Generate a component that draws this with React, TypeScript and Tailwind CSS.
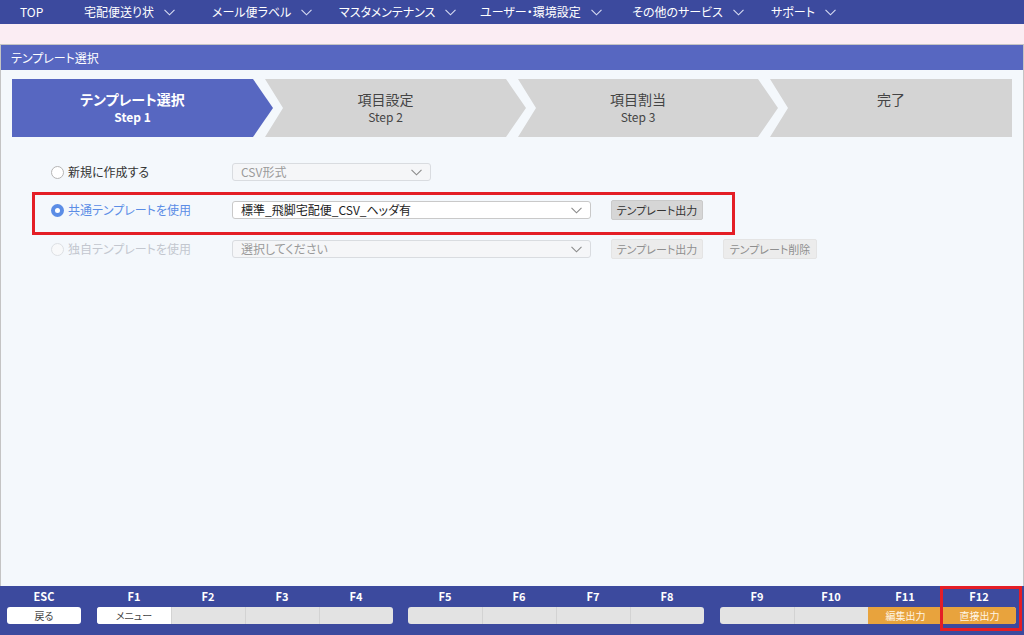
import React from 'react';

const font = "font-['Noto_Sans_CJK_JP','Noto_Sans',sans-serif] [font-feature-settings:'palt']";

function Chevron({ className = '' }: { className?: string }) {
  return (
    <svg width="11" height="7" viewBox="0 0 11 7" className={className}>
      <polyline points="0.5,0.8 5.5,5.8 10.5,0.8" fill="none" stroke="currentColor" strokeWidth="1.1" />
    </svg>
  );
}

const navItems = [
  { label: 'TOP', w: 'w-[64px]', menu: false },
  { label: '宅配便送り状', w: 'w-[128px]', menu: true },
  { label: 'メール便ラベル', w: 'w-[127px]', menu: true },
  { label: 'マスタメンテナンス', w: 'w-[141px]', menu: true },
  { label: 'ユーザー・環境設定', w: 'w-[152px]', menu: true },
  { label: 'その他のサービス', w: 'w-[139px]', menu: true },
  { label: 'サポート', w: 'w-[100px]', menu: true },
];

function Radio({ checked, disabled }: { checked?: boolean; disabled?: boolean }) {
  if (checked) {
    return (
      <span className="w-[13px] h-[13px] rounded-full bg-[#5b8de6] flex items-center justify-center shrink-0">
        <span className="w-[5px] h-[5px] rounded-full bg-white" />
      </span>
    );
  }
  return (
    <span className={`w-[13px] h-[13px] rounded-full border shrink-0 ${disabled ? 'border-[#dde0e4] bg-[#f8f9fa]' : 'border-[#b5b5b5] bg-white'}`} />
  );
}

function Select({ text, width, tone }: { text: string; width: string; tone: 'on' | 'off' }) {
  return (
    <div className={`${width} h-[18px] rounded-[3px] border flex items-center justify-between pl-[8px] pr-[8px] text-[12px] ${tone === 'on' ? 'bg-white border-[#c9c9c9] text-[#222]' : 'bg-[#f5f6f8] border-[#d9dce0] text-[#9a9a9a]'}`}>
      <span className="leading-none">{text}</span>
      <Chevron className="text-[#8a8a8a]" />
    </div>
  );
}

function Btn({ label, disabled, width }: { label: string; disabled?: boolean; width: string }) {
  return (
    <button className={`${width} h-[20px] rounded-[2px] border flex items-center justify-center text-[11px] leading-none ${disabled ? 'bg-[#ececec] border-[#e4e4e4] text-[#8f8f8f]' : 'bg-[#d6d6d6] border-[#cacaca] text-[#333]'}`}>
      {label}
    </button>
  );
}

const stepShapes = [
  '[clip-path:polygon(0_0,calc(100%_-_20px)_0,100%_50%,calc(100%_-_20px)_100%,0_100%)]',
  '[clip-path:polygon(0_0,calc(100%_-_20px)_0,100%_50%,calc(100%_-_20px)_100%,0_100%,18px_50%)]',
  '[clip-path:polygon(0_0,calc(100%_-_20px)_0,100%_50%,calc(100%_-_20px)_100%,0_100%,18px_50%)]',
  '[clip-path:polygon(0_0,100%_0,100%_100%,0_100%,18px_50%)]',
];

const steps = [
  { title: 'テンプレート選択', sub: 'Step 1', w: 'w-[261px]', active: true },
  { title: '項目設定', sub: 'Step 2', w: 'w-[261px] -ml-[8px]' },
  { title: '項目割当', sub: 'Step 3', w: 'w-[260px] -ml-[8px]' },
  { title: '完了', sub: '', w: 'flex-1 -ml-[8px]' },
];

type Key = { k: string; label?: string; tone?: 'white' | 'gray' | 'orange' };
const groups: Key[][] = [
  [{ k: 'F1', label: 'メニュー', tone: 'white' }, { k: 'F2' }, { k: 'F3' }, { k: 'F4' }],
  [{ k: 'F5' }, { k: 'F6' }, { k: 'F7' }, { k: 'F8' }],
  [{ k: 'F9' }, { k: 'F10' }, { k: 'F11', label: '編集出力', tone: 'orange' }, { k: 'F12', label: '直接出力', tone: 'orange' }],
];

function KeyGroup({ keys, className = '' }: { keys: Key[]; className?: string }) {
  return (
    <div className={`w-[296px] flex flex-col ${className}`}>
      <div className="grid grid-cols-4 h-[21px] items-center">
        {keys.map((k) => (
          <span key={k.k} className="text-center text-white text-[11px] font-bold leading-none">{k.k}</span>
        ))}
      </div>
      <div className="grid grid-cols-4 h-[17px] rounded-[3px] overflow-hidden bg-[#e3e3e3]">
        {keys.map((k, i) => (
          <div
            key={k.k}
            className={`flex items-center justify-center text-[10px] leading-none ${i > 0 ? 'border-l border-[#d3d3d3]' : ''} ${k.tone === 'white' ? 'bg-white text-[#444]' : k.tone === 'orange' ? 'bg-[#e8a33d] text-[#fff6e6] border-[#e8a33d]' : ''}`}
          >
            {k.label}
          </div>
        ))}
      </div>
    </div>
  );
}

export default function App() {
  return (
    <div className={`w-[1024px] h-[635px] flex flex-col bg-[#fbedf3] ${font} relative`}>
      {/* top nav */}
      <div className="h-[24px] bg-[#3c4a9e] flex items-center pl-[20px] text-white text-[12px]">
        {navItems.map((n) => (
          <div key={n.label} className={`${n.w} flex items-center gap-[10px] shrink-0`}>
            <span className="leading-none">{n.label}</span>
            {n.menu && <Chevron className="text-[#d8dcf2]" />}
          </div>
        ))}
      </div>
      <div className="h-[20px]" />

      {/* main panel */}
      <div className="flex-1 flex flex-col border border-b-0 border-[#c4c4c4] bg-[#f4f8fc]">
        <div className="h-[25px] bg-[#5767c1] flex items-center px-[10px] text-white text-[12px]">テンプレート選択</div>

        <div className="flex mx-[11px] mt-[9px] h-[58px]">
          {steps.map((s, i) => (
            <div
              key={s.title}
              className={`${s.w} ${stepShapes[i]} ${s.active ? 'bg-[#5767c1] text-white' : 'bg-[#d4d4d4] text-[#444]'} flex flex-col items-center pt-[11px] ${i < 3 ? 'pr-[20px]' : ''}`}
            >
              <span className={`text-[14px] leading-[18px] ${s.active ? 'font-bold' : ''}`}>{s.title}</span>
              {s.sub && <span className={`text-[12px] leading-[18px] ${s.active ? 'font-bold' : 'font-normal'}`}>{s.sub}</span>}
            </div>
          ))}
        </div>

        <div className="mt-[16px] pl-[50px] flex flex-col">
          <div className="h-[38px] flex items-center">
            <div className="w-[181px] flex items-center gap-[4px]">
              <Radio />
              <span className="text-[12px] text-[#333]">新規に作成する</span>
            </div>
            <Select text="CSV形式" width="w-[199px]" tone="off" />
          </div>
          <div className="h-[38px] flex items-center">
            <div className="w-[181px] flex items-center gap-[4px]">
              <Radio checked />
              <span className="text-[12px] text-[#5b8de6]">共通テンプレートを使用</span>
            </div>
            <Select text="標準_飛脚宅配便_CSV_ヘッダ有" width="w-[359px]" tone="on" />
            <div className="ml-[20px]"><Btn label="テンプレート出力" width="w-[92px]" /></div>
          </div>
          <div className="h-[40px] flex items-center">
            <div className="w-[181px] flex items-center gap-[4px]">
              <Radio disabled />
              <span className="text-[12px] text-[#c3c7cf]">独自テンプレートを使用</span>
            </div>
            <Select text="選択してください" width="w-[359px]" tone="off" />
            <div className="ml-[20px]"><Btn label="テンプレート出力" width="w-[92px]" disabled /></div>
            <div className="ml-[20px]"><Btn label="テンプレート削除" width="w-[94px]" disabled /></div>
          </div>
        </div>
      </div>

      {/* function keys */}
      <div className="h-[49px] bg-[#3c4a9e] flex px-[7px]">
        <div className="w-[74px] flex flex-col">
          <div className="h-[21px] flex items-center justify-center text-white text-[11px] font-bold leading-none">ESC</div>
          <div className="h-[17px] rounded-[3px] bg-white flex items-center justify-center text-[10px] text-[#444] leading-none">戻る</div>
        </div>
        <KeyGroup keys={groups[0]} className="ml-[16px]" />
        <KeyGroup keys={groups[1]} className="ml-[15px]" />
        <KeyGroup keys={groups[2]} className="ml-[16px]" />
      </div>

      {/* annotation boxes */}
      <div className="absolute left-[32px] top-[192px] w-[703px] h-[43px] border-[3px] border-[#e41e26] pointer-events-none" />
      <div className="absolute left-[940px] top-[586px] w-[82px] h-[45px] border-[3px] border-[#e41e26] pointer-events-none" />
    </div>
  );
}
